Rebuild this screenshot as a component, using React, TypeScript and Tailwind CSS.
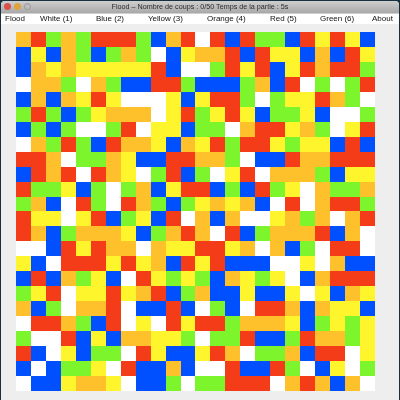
const rows = [
  "ORGOGRRRGBORWRBRGGBRYRYB",
  "BYBOGBGOGWBYOORBRYYBOBRY",
  "BOYOYYYYYRBWWGRYRBYRORRG",
  "WOOGWOGBBRRGBBBGOBRWGWGR",
  "BOBOYRYWWWYBYRRGWGYYROGW",
  "GRGBGYOOOWYRGYRYBGGYBWWG",
  "BGBGWWGRWYYBGGWORRYOGWYR",
  "WOGRGBROOYBOYRGRRYGYYBRB",
  "RROWGGOYBBRROOGWBBROORRR",
  "BRORWROYWGRBGWYRWOOOGBYY",
  "RGGYBGWGOBYRRBGBRGYWOGGO",
  "GOBWRGWROGBGYOYOBWRWORRG",
  "RYYWYRBGYBRWOBOWWYOGOWOR",
  "ROBGOOOYBGOROWRBGOOORBOW",
  "WWBRYROOWOYYRRYOWOBGWRRW",
  "YBWRRRYRYOBRYRBBBWWYWOBB",
  "BRBOGYBWRYGYGBOYGYWBORRR",
  "GYRWYYRYORBGOBBYBBYWYBOY",
  "OBGWOORWBBRBWGBWRROBOYYB",
  "WRROGBRWYWRYRRGOOOYBGYGY",
  "GWWRBYBOOYYGWGGRBBGROOGY",
  "RBWYBGGWRYBBYROWGGOBRRWY",
  "BWBGGYWRBBOBWWRBBRGWBYWG",
  "WBBYOOYWBBGWGGRRRWOROBOW",
];

const colors: Record<string, string> = {
  O: "bg-[#ffc12b]",
  R: "bg-[#f53c18]",
  G: "bg-[#7df52c]",
  B: "bg-[#0050ff]",
  Y: "bg-[#fff52c]",
  W: "bg-white",
};

const menu = [
  { label: "Flood", cls: "w-[35px]" },
  { label: "White (1)", cls: "w-[56px]" },
  { label: "Blue (2)", cls: "w-[52px]" },
  { label: "Yellow (3)", cls: "w-[59px]" },
  { label: "Orange (4)", cls: "w-[63px]" },
  { label: "Red (5)", cls: "w-[50px]" },
  { label: "Green (6)", cls: "w-[52px]" },
  { label: "About", cls: "w-[24px]" },
];

export default function App() {
  return (
    <div className="w-[400px] h-[400px] bg-[#17303f] px-px pt-px overflow-hidden font-['Liberation_Sans',sans-serif]">
      <div className="h-[399px] w-[398px] bg-[#eeeeee] flex flex-col overflow-hidden rounded-t-[4px]">
        <div className="relative h-[12px] shrink-0 flex items-center justify-center bg-gradient-to-b from-[#cfcfcf] to-[#a8a8a8]">
          <div className="absolute left-[3px] top-[2px] flex gap-[3px]">
            <span className="w-[7px] h-[7px] rounded-full bg-[#d9524a]" />
            <span className="w-[7px] h-[7px] rounded-full bg-[#e0a33c]" />
            <span className="w-[7px] h-[7px] rounded-full bg-[#bdbdbd] border border-[#999999]" />
          </div>
          <span className="text-[7.2px] leading-none text-[#2a2a2a] blur-[0.3px] whitespace-nowrap">
            Flood – Nombre de coups : 0/50 Temps de la partie : 5s
          </span>
        </div>
        <div className="h-[11px] shrink-0 bg-white flex items-center pl-[4px] border-t border-[#cfcfcf]">
          {menu.map((m) => (
            <span
              key={m.label}
              className={`${m.cls} shrink-0 text-[8px] leading-none text-[#111111] blur-[0.3px] whitespace-nowrap`}
            >
              {m.label}
            </span>
          ))}
        </div>
        <div className="flex-1 pl-[15px] pt-[8px]">
          <div className="w-[359px] h-[359px] grid grid-cols-[repeat(24,1fr)] grid-rows-[repeat(24,1fr)] blur-[0.35px]">
            {rows.flatMap((row, r) =>
              row.split("").map((c, i) => <div key={`${r}-${i}`} className={colors[c]} />)
            )}
          </div>
        </div>
      </div>
    </div>
  );
}
